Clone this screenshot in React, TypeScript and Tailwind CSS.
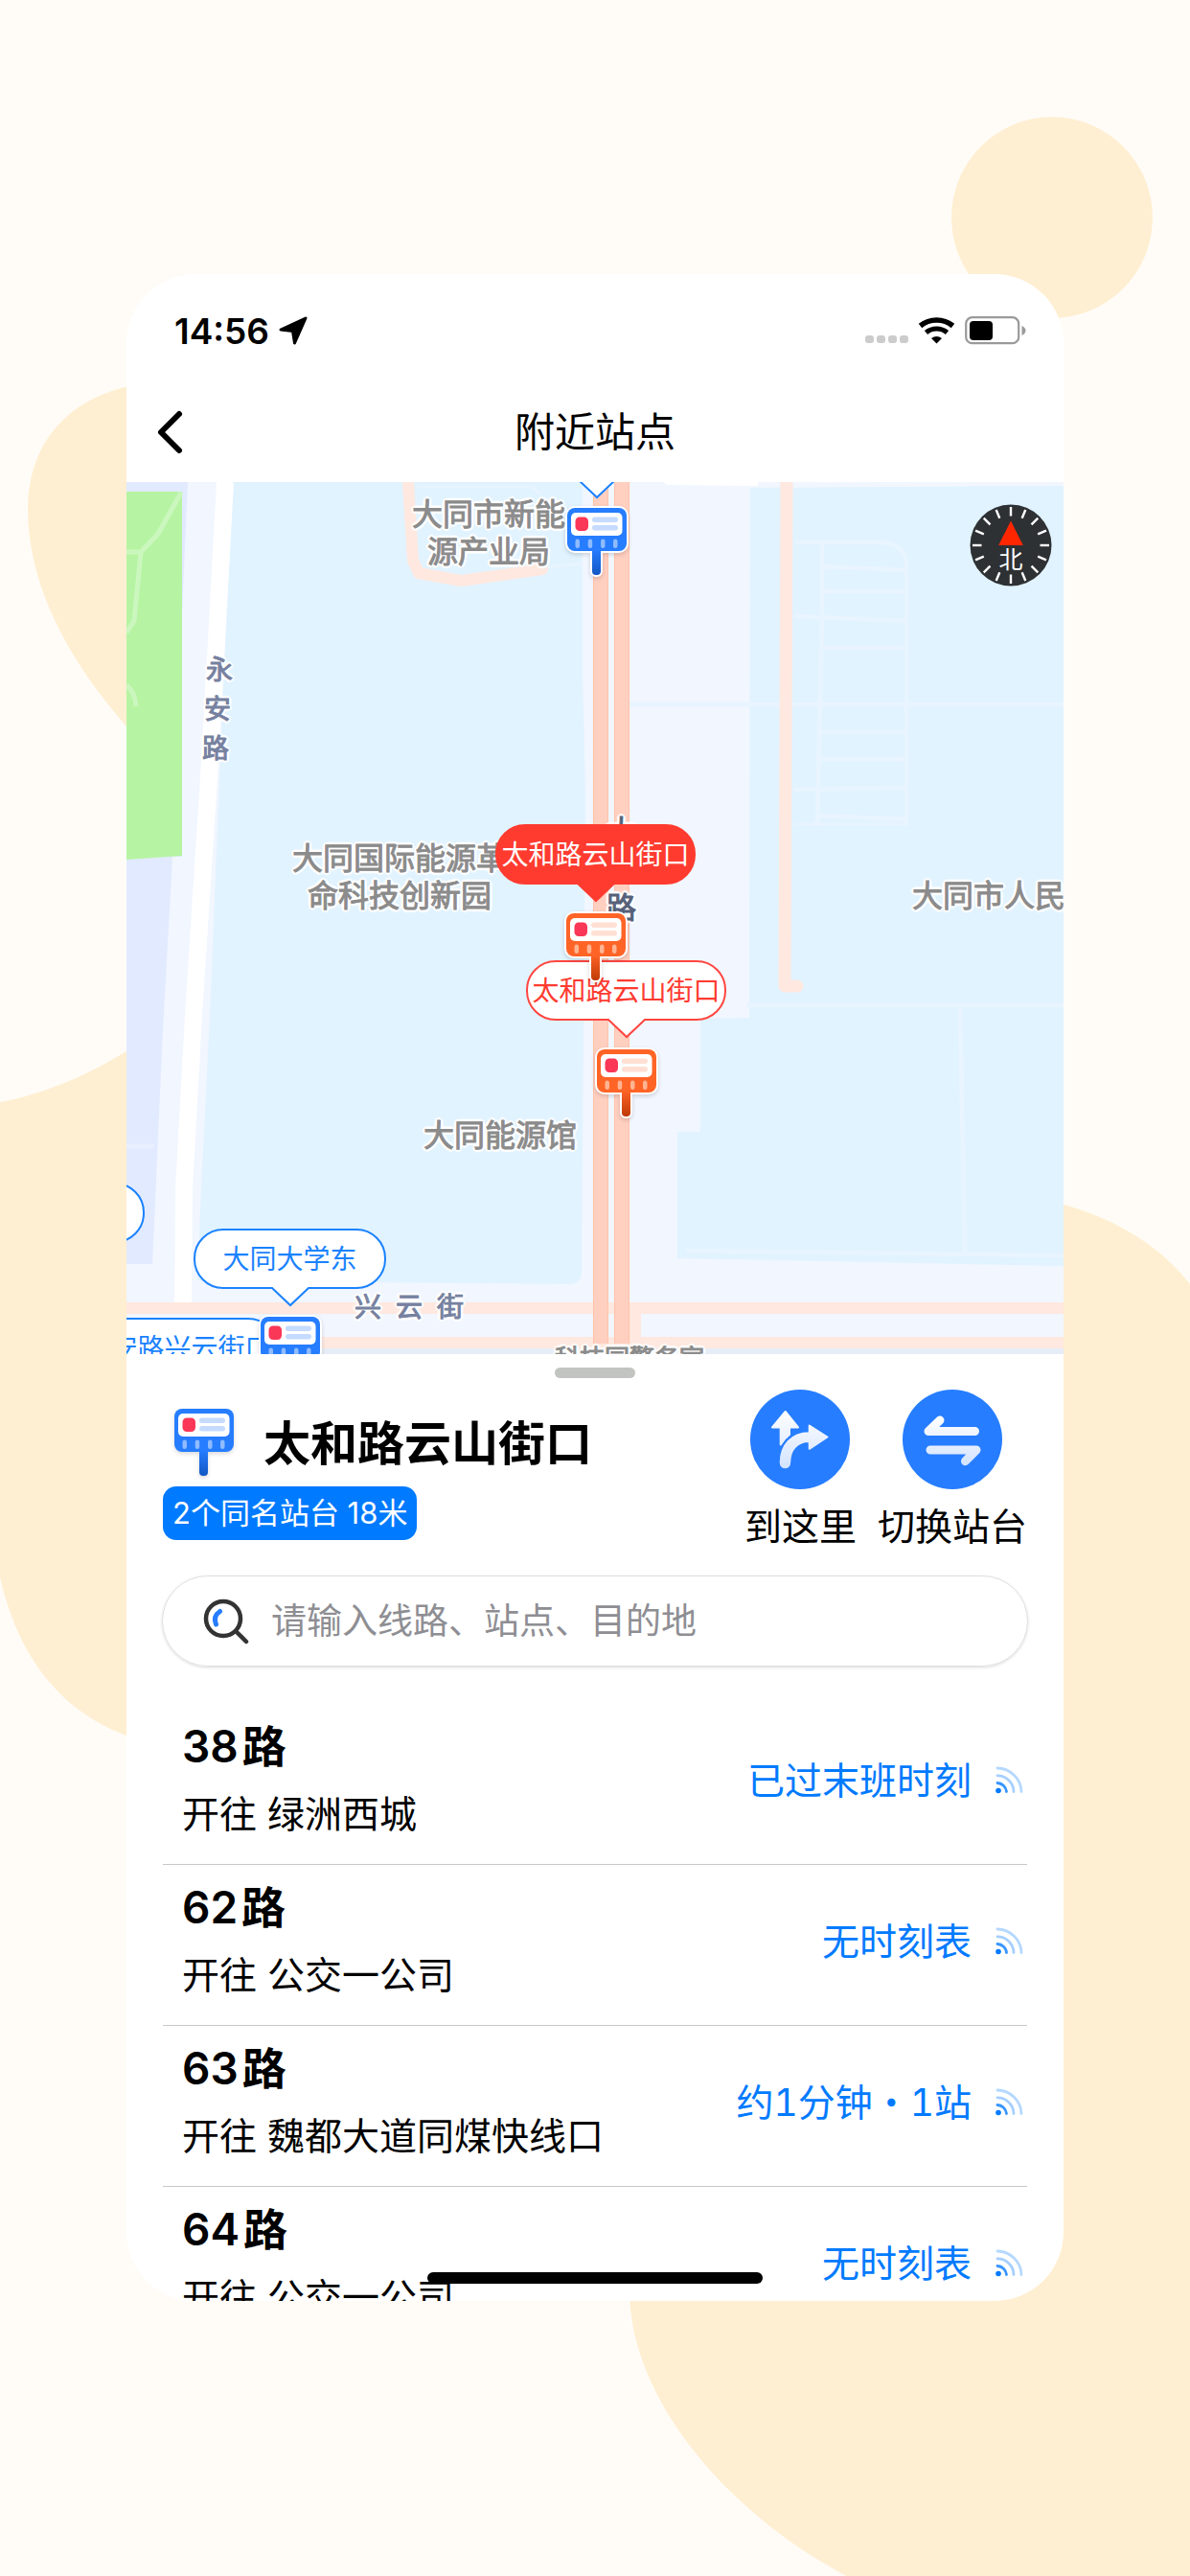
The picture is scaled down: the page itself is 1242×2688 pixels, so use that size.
import clsx from "clsx"

const routes = [
  { id: "38", dest: "绿洲西城", status: "已过末班时刻" },
  { id: "62", dest: "公交一公司", status: "无时刻表" },
  { id: "63", dest: "魏都大道同煤快线口", status: "约1分钟・1站" },
  { id: "64", dest: "公交一公司", status: "无时刻表" },
]

const places = [
  { lines: ["大同市新能", "源产业局"], pos: "left-[298px] top-[14px]" },
  { lines: ["大同国际能源革", "命科技创新园"], pos: "left-[173px] top-[373px]" },
  { lines: ["大同能源馆"], pos: "left-[310px] top-[662px]" },
  { lines: ["大同市人民"], pos: "left-[820px] top-[412px]" },
]

// thick glyphs with a white outline, shared by every label drawn on the map
const halo =
  "[-webkit-text-stroke:1px_currentColor] [text-shadow:3px_0_1px_#fff,-3px_0_1px_#fff,0_3px_1px_#fff,0_-3px_1px_#fff,2px_2px_1px_#fff,-2px_-2px_1px_#fff,2px_-2px_1px_#fff,-2px_2px_1px_#fff]"

const compassTicks = Array.from({ length: 16 }, (_, i) => i * 22.5)

function Backdrop() {
  return (
    <svg
      className="absolute inset-0 w-full h-full"
      viewBox="0 0 1242 2688"
      preserveAspectRatio="none"
      fill="#ffefd2"
      aria-hidden="true"
    >
      <circle cx="1098" cy="227" r="105" />
      <path d="M140 402 C74 414 29 460 29 531 C29 610 70 690 140 767 Z" />
      <path d="M140 1092 C92 1122 48 1141 0 1150 V1646 C20 1734 68 1790 140 1814 Z" />
      <path d="M1100 1254 C1156 1268 1208 1296 1242 1340 V2688 H883 C755 2620 657 2500 657 2390 L1000 2300 Z" />
    </svg>
  )
}

function StopSign({ color = "blue", outlined = false }: { color?: "blue" | "orange"; outlined?: boolean }) {
  const main = color === "blue" ? "#267dff" : "#ff6427"
  const dark = color === "blue" ? "#1257c4" : "#bf3a06"
  const stripe = color === "blue" ? "#c5dbff" : "#ffe0d3"
  const tick = color === "blue" ? "#8fbbff" : "#ffb493"
  const pole = `pole-${color}`
  return (
    <svg className="w-[70px] h-[80px] drop-shadow-[0_2px_2px_rgba(0,0,0,0.15)]" viewBox="-4 -4 70 80" aria-hidden="true">
      <defs>
        <linearGradient id={pole} x1="0" y1="0" x2="0" y2="1">
          <stop offset="0.1" stopColor={main} />
          <stop offset="1" stopColor={dark} />
        </linearGradient>
      </defs>
      {outlined && (
        <g fill="#fff" stroke="#fff" strokeWidth="4">
          <rect width="62" height="45" rx="8" />
          <rect x="26" y="40" width="9" height="30" rx="4" />
        </g>
      )}
      <rect x="26" y="40" width="9" height="30" rx="4" fill={`url(#${pole})`} />
      <rect width="62" height="45" rx="8" fill={main} />
      <rect x="4" y="5" width="53.5" height="24" rx="5" fill="#fff" />
      <rect x="8.5" y="9.5" width="13.5" height="14.5" rx="4.5" fill="#fa3757" />
      <rect x="26" y="9.5" width="27" height="5.5" rx="2.7" fill={stripe} />
      <rect x="26" y="18" width="27" height="5.5" rx="2.7" fill={stripe} />
      {[8.5, 21.7, 35, 48].map((x) => (
        <rect key={x} x={x} y="32.5" width="4.5" height="9.5" rx="2.2" fill={tick} />
      ))}
    </svg>
  )
}

function Bubble({ text, tone, pos }: { text?: string; tone: "blue" | "red" | "solid"; pos: string }) {
  return (
    <div
      className={clsx(
        "absolute flex h-[63px] items-center justify-center rounded-[31px] border-2 text-[28px] leading-none whitespace-nowrap",
        tone === "blue" && "border-[#1a82ff] bg-white text-[#1a82ff]",
        tone === "red" && "border-[#ff4640] bg-white text-[#ff3b30]",
        tone === "solid" && "border-[#ff3b30] bg-[#ff3b30] text-white",
        pos,
      )}
    >
      {text}
      <svg
        className={clsx(
          "absolute top-full left-1/2 -translate-x-1/2 w-[42px] h-[24px]",
          tone === "solid" ? "fill-[#ff3b30] stroke-[#ff3b30]" : "fill-white",
          tone === "blue" && "stroke-[#1a82ff]",
          tone === "red" && "stroke-[#ff4640]",
        )}
        viewBox="0 0 42 24"
        strokeWidth="2"
        aria-hidden="true"
      >
        <path d="M2 0 V1 L21 19 L40 1 V0" stroke="none" />
        <path d="M0 1 L2 1 L21 19 L40 1 L42 1" fill="none" />
      </svg>
    </div>
  )
}

function MapCanvas() {
  return (
    <svg
      className="absolute inset-0 w-full h-full"
      viewBox="132 503 978 910"
      preserveAspectRatio="xMidYMid slice"
      fill="none"
      aria-hidden="true"
    >
      <rect x="132" y="503" width="978" height="910" fill="#f1f6ff" />
      {/* districts */}
      <path d="M132 503 H196 L190 640 V894 H180 L170 1074 L159 1319 H132 Z" fill="#e2eaff" />
      <path d="M132 513 H190 V893 L132 897 Z" fill="#b6f4a3" />
      <path d="M189 514 L165 557 L147 576 H132 M147 576 L140 648 L132 660 M132 715 Q141 722 142 737" stroke="#cbf7bf" strokeWidth="5" />
      <path d="M132 1196 H161" stroke="#e9effe" strokeWidth="5" />
      <path d="M243 503 H608 V700 L611 830 L607 1326 Q607 1340 594 1340 L206 1336 L210 1240 L219 1060 L232 740 Z" fill="#e1f3ff" />
      <path d="M783 509 L1110 507 V1321 L707 1313 V1181 H731 V1063 L782 1062 Z" fill="#e1f3ff" />
      <path d="M692 503 H791 V507 L696 506 Z" fill="#fff" />
      {/* lanes */}
      <g stroke="#e8f4ff" strokeWidth="5">
        <path d="M829 566 H920 Q946 568 946 590 V862 M858 566 V640 L853 862" />
        <path d="M858 591 L946 595 M858 617 H946 M829 643 L946 648 M856 676 H946 M853 764 H946 M853 792 H946 M829 824 L946 822 M853 851 L946 855" />
        <path d="M829 860 H948" strokeWidth="3" />
        <path d="M657 735 H1110 M780 1049 H1110 M1002 1050 L1007 1306 M716 1305 L1110 1310" />
        <path d="M435 508 H555 L565 516 M570 592 L608 588" strokeWidth="3" />
      </g>
      {/* roads */}
      <path d="M235 503 L219 795 L202 1060 L192 1240 L191 1364" stroke="#fff" strokeWidth="18" />
      <g stroke="#ffe8df" strokeWidth="12" strokeLinejoin="round">
        <path d="M426 503 L431 585 L437 598 L481 606 L566 594" strokeLinecap="round" />
        <path d="M821 503 L819 1029 H832" strokeWidth="13" strokeLinecap="round" />
        <path d="M132 1365 H1110 M132 1401 H1110 M663 1360 V1406" />
      </g>
      <path d="M627 503 V1402 M649 503 V1402" stroke="#ffc3aa" strokeWidth="16" />
      <path d="M627 503 V1402 M649 503 V1402" stroke="#ffcfc0" strokeWidth="14" />
      <rect x="132" y="1407" width="978" height="6" fill="#e6edf6" />
    </svg>
  )
}

function Compass() {
  return (
    <button type="button" aria-label="指北针" className="absolute right-3 top-[23px] size-[86px]">
      <svg className="size-full" viewBox="-43 -43 86 86">
        <circle r="42.5" fill="#2e3133" />
        {compassTicks.map((a) => (
          <path key={a} d="M0 -40 V-30.5" stroke="#fff" strokeWidth="2.4" transform={`rotate(${a})`} />
        ))}
        <path d="M0 -25.5 L12.8 0 H-12.8 Z" fill="#ff2600" />
        <text y="24" textAnchor="middle" fontSize="25" fill="#fff">
          北
        </text>
      </svg>
    </button>
  )
}

function StationMap() {
  return (
    <section aria-label="地图" className="relative h-[910px] shrink-0 overflow-hidden">
      <MapCanvas />
      {places.map((p) => (
        <div
          key={p.lines[0]}
          className={clsx("absolute text-center text-[32px] leading-[39px] whitespace-nowrap text-[#8b8b8b]", halo, p.pos)}
        >
          {p.lines.map((line) => (
            <div key={line}>{line}</div>
          ))}
        </div>
      ))}
      <div className={clsx("absolute left-[447px] top-[895px] text-[26px] leading-[39px] whitespace-nowrap text-[#8b8b8b]", halo)}>
        科技园警务室
      </div>

      <div className={clsx("absolute left-[79px] top-[176px] flex flex-col text-[28px] leading-[41px] text-[#7681a0]", halo)}>
        <span className="pl-1">永</span>
        <span className="pl-0.5">安</span>
        <span>路</span>
      </div>
      <div className={clsx("absolute left-[238px] top-[841px] flex gap-[15px] text-[28px] leading-[41px] text-[#7681a0]", halo)}>
        <span>兴</span>
        <span>云</span>
        <span>街</span>
      </div>
      <div className={clsx("absolute left-[501px] top-[344px] flex flex-col gap-[40px] text-[31px] leading-[40px] text-[#566179]", halo)}>
        <span>太</span>
        <span>路</span>
      </div>

      <Bubble tone="blue" pos="left-[386px] -top-[64px] w-[209px]" />
      <Bubble tone="blue" pos="-left-[190px] top-[731px] w-[209px]" />
      <Bubble tone="blue" pos="-left-[51px] top-[872px] w-[209px]" text="永安路兴云街口" />
      <Bubble tone="blue" pos="left-[70px] top-[779px] w-[201px]" text="大同大学东" />
      <Bubble tone="red" pos="left-[417px] top-[499px] w-[209px]" text="太和路云山街口" />
      <Bubble tone="solid" pos="left-[385px] top-[357px] w-[209px]" text="太和路云山街口" />

      <div className="absolute left-[456px] top-[23px]"><StopSign outlined /></div>
      <div className="absolute left-[136px] top-[867px]"><StopSign outlined /></div>
      <div className="absolute left-[455px] top-[446px]"><StopSign color="orange" outlined /></div>
      <div className="absolute left-[487px] top-[588px]"><StopSign color="orange" outlined /></div>
      <Compass />
    </section>
  )
}

function StatusBar() {
  return (
    <div className="flex h-[118px] shrink-0 items-center justify-between pl-[50px] pr-[39px]">
      <div className="flex items-center gap-[10px]">
        <span className="text-[37px] leading-none font-semibold">14:56</span>
        <svg className="size-[30px]" viewBox="0 0 30 30" aria-hidden="true">
          <path
            d="M28 2 L16.5 28 L14.5 15.5 L2 14 Z"
            fill="#000"
            stroke="#000"
            strokeWidth="3"
            strokeLinejoin="round"
          />
        </svg>
      </div>
      <svg className="w-[168px] h-[30px]" viewBox="0 0 168 30" fill="none" aria-hidden="true">
        {[0, 12, 24, 36].map((x) => (
          <rect key={x} x={x} y="20" width="9" height="8" rx="3" fill="#ccc" />
        ))}
        <path d="M57.5 10 A27 27 0 0 1 91.5 10" stroke="#000" strokeWidth="5.5" />
        <path d="M63.5 17 A17 17 0 0 1 85.5 17" stroke="#000" strokeWidth="5" />
        <path d="M69 23 Q74.5 19 80 23 L74.5 28.5 Z" fill="#000" />
        <rect x="105.2" y="1.2" width="55" height="27" rx="6.5" stroke="#9a9a9a" strokeWidth="2.2" />
        <rect x="109" y="5" width="24" height="20" rx="4" fill="#000" />
        <path d="M163.5 10 Q167.5 12 167.5 15 T163.5 20 Z" fill="#9a9a9a" />
      </svg>
    </div>
  )
}

function DirectionsIcon() {
  return (
    <svg className="size-[104px]" viewBox="0 0 104 104" aria-hidden="true">
      <defs>
        <linearGradient id="fade-directions" gradientUnits="userSpaceOnUse" x1="0" y1="22" x2="0" y2="82">
          <stop stopColor="#fff" />
          <stop offset="1" stopColor="#d3e3ff" />
        </linearGradient>
      </defs>
      <circle cx="52" cy="52" r="52" fill="#267dff" />
      <g fill="url(#fade-directions)" stroke="url(#fade-directions)" strokeWidth="2" strokeLinejoin="round">
        <path d="M36.7 23 L50 39.5 H41 V47 Q35 51.5 31.7 57.5 V39.5 H23 Z" />
        <path d="M31.7 76 C31.7 58 43 45.5 61.7 45.3 V37.5 L80.5 49.5 L61.7 61.8 V54 C49 54 41.2 63 41.2 76 C41.2 83 31.7 83 31.7 76 Z" />
      </g>
    </svg>
  )
}

function SwapIcon() {
  return (
    <svg className="size-[104px]" viewBox="0 0 104 104" aria-hidden="true">
      <defs>
        <linearGradient id="fade-swap" gradientUnits="userSpaceOnUse" x1="0" y1="28" x2="0" y2="79">
          <stop stopColor="#fff" />
          <stop offset="1" stopColor="#d3e3ff" />
        </linearGradient>
      </defs>
      <circle cx="52" cy="52" r="52" fill="#267dff" />
      <g fill="none" stroke="url(#fade-swap)" strokeWidth="9" strokeLinecap="round" strokeLinejoin="round">
        <path d="M75.5 43.5 H27 L39 32" />
        <path d="M29 63 H77 L65.5 74.7" />
      </g>
    </svg>
  )
}

function SignalIcon() {
  return (
    <svg className="size-[29px]" viewBox="0 0 29 29" fill="none" strokeWidth="2.8" strokeLinecap="round" aria-hidden="true">
      <circle cx="3" cy="25.5" r="2.8" fill="#007aff" />
      <path d="M2 17.5 A10 10 0 0 1 11.5 26.5" stroke="#3795ff" />
      <path d="M2 9.8 A17 17 0 0 1 19 26.5" stroke="#a6cfff" />
      <path d="M2 2 A25.5 25.5 0 0 1 27 26.5" stroke="#b5d8ff" />
    </svg>
  )
}

function StationHeader() {
  return (
    <div className="mt-3 flex justify-between px-[38px]">
      <div className="pt-4">
        <div className="flex items-center gap-[27px] pl-2">
          <StopSign />
          <h2 className="text-[49px] leading-[71px] font-semibold">太和路云山街口</h2>
        </div>
        <div className="mt-[5px] inline-block rounded-[14px] bg-[#007aff] px-[10px] text-[31px] leading-[56px] text-white">
          2个同名站台 18米
        </div>
      </div>
      <div className="flex gap-[22px] text-[39px] leading-[54px]">
        <button type="button" className="flex flex-col items-center gap-3">
          <DirectionsIcon />
          到这里
        </button>
        <button type="button" className="flex flex-col items-center gap-3">
          <SwapIcon />
          切换站台
        </button>
      </div>
    </div>
  )
}

function SearchBox() {
  return (
    <label className="mx-[37px] mt-6 flex h-[95px] shrink-0 items-center gap-[22px] rounded-full border border-[#dedede] pl-[41px] pr-10 shadow-[0_1px_3px_rgba(0,0,0,0.14)]">
      <span className="sr-only">搜索</span>
      <svg className="size-[50px] shrink-0" viewBox="0 0 50 50" fill="none" strokeLinecap="round" aria-hidden="true">
        <circle cx="22" cy="22" r="18" stroke="#333" strokeWidth="4.5" />
        <path d="M36 36 L46 46" stroke="#333" strokeWidth="4.5" />
        <path d="M18.5 14.5 Q11 19.5 14.5 28" stroke="#267dff" strokeWidth="5" />
      </svg>
      <input
        type="text"
        placeholder="请输入线路、站点、目的地"
        className="min-w-0 flex-1 bg-transparent text-[37px] outline-none placeholder:text-[#8e8e93]"
      />
    </label>
  )
}

export default function App() {
  return (
    <div className="relative flex h-screen flex-col overflow-hidden bg-[#fffcf8] px-33 pt-[286px] pb-[287px] font-[Inter,'Noto_Sans_CJK_SC',sans-serif] text-black">
      <Backdrop />
      <main className="relative flex min-h-0 flex-1 flex-col overflow-hidden rounded-[72px] bg-white">
        <StatusBar />
        <header className="grid h-[99px] shrink-0 grid-cols-[1fr_auto_1fr] items-center pb-1.5">
          <button type="button" aria-label="返回" className="ml-7">
            <svg className="w-[34px] h-[50px]" viewBox="0 0 34 50" fill="none" stroke="#000" strokeWidth="6" strokeLinecap="round" strokeLinejoin="round">
              <path d="M27 6 L8 25 L27 44" />
            </svg>
          </button>
          <h1 className="text-[42px] leading-none">附近站点</h1>
        </header>
        <StationMap />
        <section className="flex min-h-0 flex-1 flex-col">
          <div className="mx-auto mt-[14px] h-[11px] w-[84px] shrink-0 rounded-full bg-[#c2c4c1]" />
          <StationHeader />
          <SearchBox />
          <ul className="mx-[38px] mt-[39px] min-h-0 flex-1 overflow-hidden">
            {routes.map((r) => (
              <li key={r.id} className="flex h-[168px] items-center justify-between border-b border-[#c8c8c8] pb-2 pl-5 pr-1">
                <div className="flex flex-col gap-[15px] whitespace-nowrap">
                  <h3 className="flex gap-1 text-[46px] leading-[56px] font-semibold">
                    <span>{r.id}</span>
                    <span>路</span>
                  </h3>
                  <p className="text-[39px] leading-[56px]">开往 {r.dest}</p>
                </div>
                <div className="flex items-center gap-[25px] text-[39px] leading-[56px] whitespace-nowrap text-[#007aff] tabular-nums">
                  {r.status}
                  <SignalIcon />
                </div>
              </li>
            ))}
          </ul>
        </section>
        <div className="absolute bottom-[18px] left-1/2 h-3 w-[350px] -translate-x-1/2 rounded-full bg-black" />
      </main>
    </div>
  )
}
